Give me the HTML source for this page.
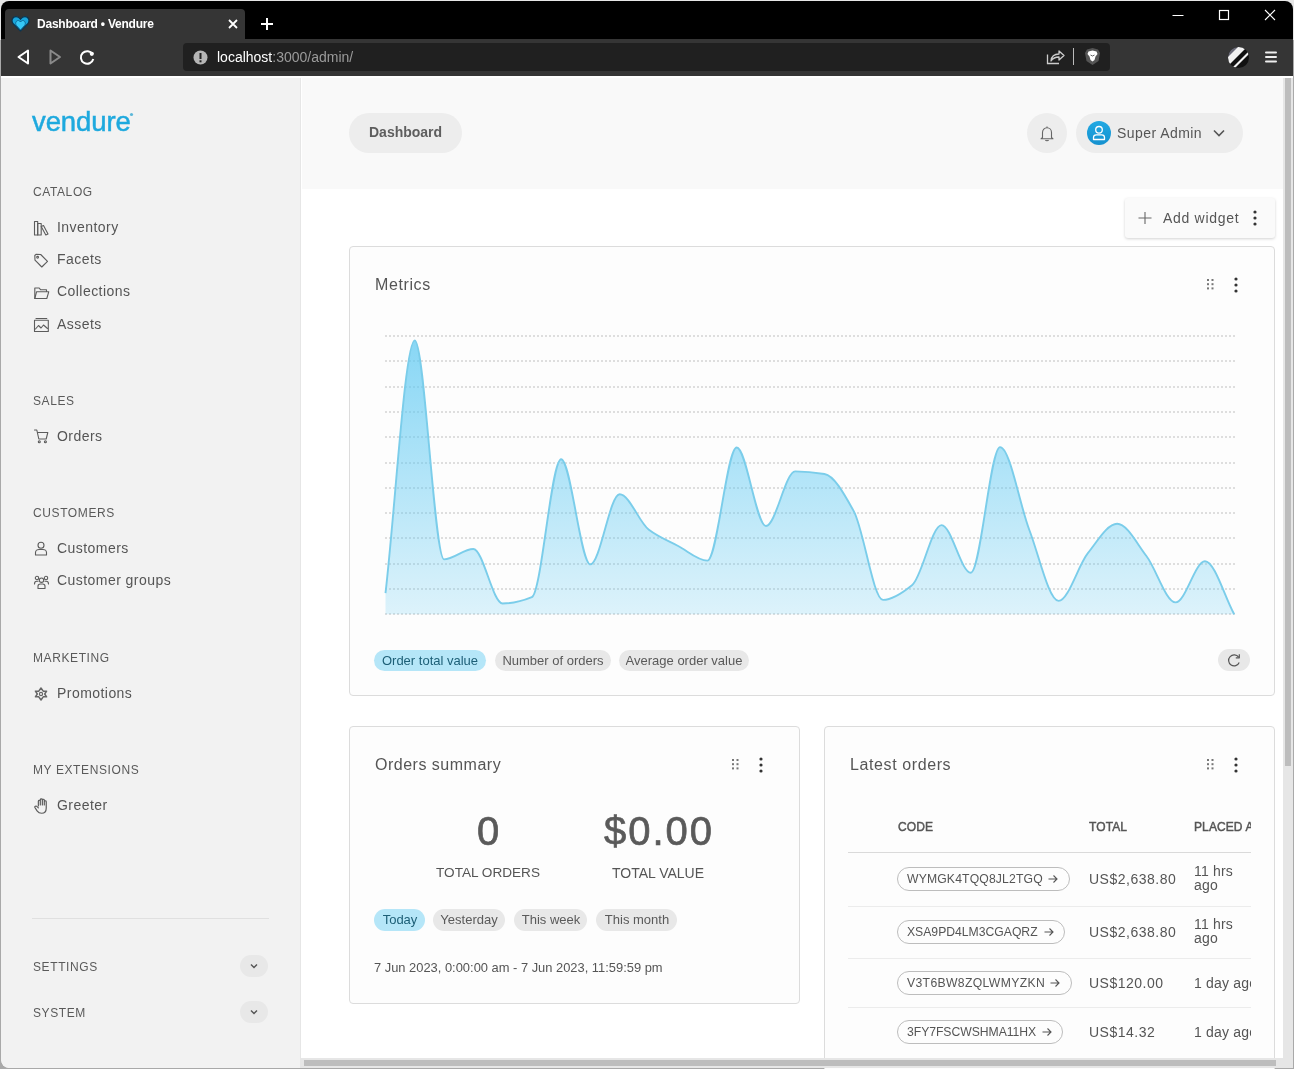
<!DOCTYPE html>
<html><head><meta charset="utf-8"><title>Dashboard • Vendure</title>
<style>
html,body{margin:0;padding:0;}
body{width:1294px;height:1069px;position:relative;overflow:hidden;background:#f3f3f3;font-family:"Liberation Sans",sans-serif;}
div{position:absolute;box-sizing:border-box;}
.t{white-space:nowrap;will-change:transform;}
</style></head><body>
<div style="left:0px;top:0px;width:1294px;height:1069px;background:#a9a9a9;"></div>
<div style="left:0px;top:0px;width:1294px;height:40px;background:#e6e6e6;"></div>
<div style="left:1px;top:1px;width:1292px;height:1067px;background:#000;border-radius:8px;"></div>
<div style="left:5px;top:9px;width:240px;height:30px;background:#353535;border-radius:4px 4px 0 0;"></div>
<svg style="position:absolute;left:11px;top:15px;" width="19" height="17" viewBox="0 0 19 17"><path d="M9.5 16 L2.2 8.8 C-0.3 5.8 1.6 1.6 5 1.6 C7 1.6 8.5 2.8 9.5 4.2 C10.5 2.8 12 1.6 14 1.6 C17.4 1.6 19.3 5.8 16.8 8.8 Z" fill="#18a6dd" stroke="#0b3550" stroke-width="1.2"/><path d="M9.5 15 L5.3 10.3 C3.8 8.3 5.2 5.4 7.4 5.5 C8.4 5.6 9 6.2 9.5 7 C10 6.2 10.6 5.6 11.6 5.5 C13.8 5.4 15.2 8.3 13.7 10.3 Z" fill="#35c8f7" stroke="#0e5a84" stroke-width="0.8"/></svg>
<div class="t" style="left:37px;top:16.84px;font-size:12px;line-height:14px;font-weight:700;color:#fff;letter-spacing:-0.22px;">Dashboard • Vendure</div>
<svg style="position:absolute;left:227px;top:18px;" width="12" height="12" viewBox="0 0 12 12"><path d="M2 2 L10 10 M10 2 L2 10" stroke="#fff" stroke-width="1.8"/></svg>
<svg style="position:absolute;left:260px;top:17px;" width="14" height="14" viewBox="0 0 14 14"><path d="M7 1 V13 M1 7 H13" stroke="#fff" stroke-width="2"/></svg>
<svg style="position:absolute;left:1170px;top:5px;" width="110" height="20" viewBox="0 0 110 20"><path d="M2.5 10.5 H13.5" stroke="#fff" stroke-width="1"/><rect x="49.5" y="5.5" width="9" height="9" fill="none" stroke="#fff" stroke-width="1.2"/><path d="M95 5 L105 15 M105 5 L95 15" stroke="#fff" stroke-width="1.1"/></svg>
<div style="left:1px;top:39px;width:1292px;height:37px;background:#353535;"></div>
<svg style="position:absolute;left:14px;top:46px;" width="84" height="22" viewBox="0 0 84 22"><path d="M4.5 11 L14 4.5 V17.5 Z" fill="none" stroke="#fff" stroke-width="2" stroke-linejoin="round"/><path d="M36.5 4.5 L46 11 L36.5 17.5 Z" fill="none" stroke="#8a8a8a" stroke-width="2" stroke-linejoin="round"/><path d="M78.6 8.2 A6.3 6.3 0 1 0 79.3 13" fill="none" stroke="#fff" stroke-width="2"/><circle cx="77.8" cy="7.8" r="2.1" fill="#fff"/></svg>
<div style="left:183px;top:43px;width:927px;height:28px;background:#202020;border-radius:4px;"></div>
<svg style="position:absolute;left:193px;top:50px;" width="15" height="15" viewBox="0 0 15 15"><circle cx="7.5" cy="7.5" r="7" fill="#b5b5b5"/><rect x="6.5" y="3" width="2" height="6" fill="#202020"/><rect x="6.5" y="10.3" width="2" height="2" fill="#202020"/></svg>
<div class="t" style="left:217px;top:48.65px;font-size:14px;line-height:17px;font-weight:400;color:#fff;letter-spacing:0px;">localhost<span style="color:#9a9a9a">:3000/admin/</span></div>
<svg style="position:absolute;left:1045px;top:47px;" width="22" height="20" viewBox="0 0 22 20"><path d="M2.5 7.5 V16.5 H14" fill="none" stroke="#ccc" stroke-width="1.3"/><path d="M6 14 C6.5 9 10 7 14 7 V4 L19 8.5 L14 13 V10 C11 10 8 11 6 14 Z" fill="none" stroke="#ccc" stroke-width="1.3" stroke-linejoin="round"/></svg>
<div style="left:1073px;top:48px;width:1px;height:17px;background:#bbb;"></div>
<svg style="position:absolute;left:1084px;top:47px;" width="17" height="19" viewBox="0 0 17 19"><path d="M8.5 1 L14 2.5 L16 6 L14.5 14 L8.5 18 L2.5 14 L1 6 L3 2.5 Z" fill="#555"/><path d="M8.5 3.5 L12.5 4.5 L13.5 7 L11.5 9.5 L10.5 13 L8.5 14.5 L6.5 13 L5.5 9.5 L3.5 7 L4.5 4.5 Z" fill="#fff"/><path d="M6.5 8 L8.5 9 L10.5 8" stroke="#555" stroke-width="0.9" fill="none"/></svg>
<svg style="position:absolute;left:1227px;top:46px;" width="23" height="23" viewBox="0 0 23 23"><defs><clipPath id="cc"><circle cx="11.5" cy="11.5" r="10.5"/></clipPath></defs><g clip-path="url(#cc)"><rect width="23" height="23" fill="#111"/><path d="M-2 16 L16 -2 L-2 -2 Z" fill="#6b6b78"/><path d="M1 20 L20 1 L15 -3 L-4 16 Z" fill="#f2f2f2"/><path d="M6 24 L24 6 L22.5 4.5 L4.5 22.5 Z" fill="#f2f2f2"/></g></svg>
<svg style="position:absolute;left:1264px;top:50px;" width="14" height="14" viewBox="0 0 14 14"><path d="M2 2.5 H12 M2 7 H12 M2 11.5 H12" stroke="#eee" stroke-width="2" stroke-linecap="round"/></svg>
<div style="left:1px;top:76px;width:1292px;height:992px;background:#fff;border-radius:0 0 8px 8px;overflow:hidden;"></div>
<div style="left:1px;top:78px;width:299px;height:990px;background:#f2f2f2;border-radius:0 0 0 8px;"></div>
<div style="left:300px;top:78px;width:1px;height:990px;background:#e6e6e6;"></div>
<div class="t" style="left:31.5px;top:104.97px;font-size:27.5px;line-height:33px;font-weight:400;color:#1ea9de;letter-spacing:-0.1px;-webkit-text-stroke:0.5px #1ea9de;">vendure</div>
<svg style="position:absolute;left:129px;top:112px;" width="5" height="5" viewBox="0 0 5 5"><circle cx="2.5" cy="2.5" r="1.6" fill="#5bb7d9"/></svg>
<div class="t" style="left:33px;top:185.04px;font-size:12px;line-height:14px;font-weight:400;color:#5a5a5a;letter-spacing:0.6px;">CATALOG</div>
<div class="t" style="left:57px;top:218.65px;font-size:14px;line-height:17px;font-weight:400;color:#555;letter-spacing:0.45px;">Inventory</div>
<div class="t" style="left:57px;top:250.65px;font-size:14px;line-height:17px;font-weight:400;color:#555;letter-spacing:0.45px;">Facets</div>
<div class="t" style="left:57px;top:283.15px;font-size:14px;line-height:17px;font-weight:400;color:#555;letter-spacing:0.45px;">Collections</div>
<div class="t" style="left:57px;top:315.65px;font-size:14px;line-height:17px;font-weight:400;color:#555;letter-spacing:0.45px;">Assets</div>
<div class="t" style="left:33px;top:393.84px;font-size:12px;line-height:14px;font-weight:400;color:#5a5a5a;letter-spacing:0.6px;">SALES</div>
<div class="t" style="left:57px;top:427.65px;font-size:14px;line-height:17px;font-weight:400;color:#555;letter-spacing:0.45px;">Orders</div>
<div class="t" style="left:33px;top:506.14px;font-size:12px;line-height:14px;font-weight:400;color:#5a5a5a;letter-spacing:0.6px;">CUSTOMERS</div>
<div class="t" style="left:57px;top:539.65px;font-size:14px;line-height:17px;font-weight:400;color:#555;letter-spacing:0.45px;">Customers</div>
<div class="t" style="left:57px;top:571.75px;font-size:14px;line-height:17px;font-weight:400;color:#555;letter-spacing:0.45px;">Customer groups</div>
<div class="t" style="left:33px;top:650.74px;font-size:12px;line-height:14px;font-weight:400;color:#5a5a5a;letter-spacing:0.6px;">MARKETING</div>
<div class="t" style="left:57px;top:684.75px;font-size:14px;line-height:17px;font-weight:400;color:#555;letter-spacing:0.45px;">Promotions</div>
<div class="t" style="left:33px;top:763.04px;font-size:12px;line-height:14px;font-weight:400;color:#5a5a5a;letter-spacing:0.6px;">MY EXTENSIONS</div>
<div class="t" style="left:57px;top:796.75px;font-size:14px;line-height:17px;font-weight:400;color:#555;letter-spacing:0.45px;">Greeter</div>
<div style="left:32px;top:918px;width:237px;height:1px;background:#e0e0e0;"></div>
<div class="t" style="left:33px;top:960.24px;font-size:12px;line-height:14px;font-weight:400;color:#5a5a5a;letter-spacing:0.6px;">SETTINGS</div>
<div class="t" style="left:33px;top:1006.34px;font-size:12px;line-height:14px;font-weight:400;color:#5a5a5a;letter-spacing:0.6px;">SYSTEM</div>
<div style="left:240px;top:955px;width:28px;height:22px;background:#e8e8e8;border-radius:11px;"></div>
<svg style="position:absolute;left:248px;top:960px;" width="12" height="12" viewBox="0 0 12 12"><path d="M3 4.5 L6 7.5 L9 4.5" fill="none" stroke="#555" stroke-width="1.4"/></svg>
<div style="left:240px;top:1000.6px;width:28px;height:22px;background:#e8e8e8;border-radius:11px;"></div>
<svg style="position:absolute;left:248px;top:1005.6px;" width="12" height="12" viewBox="0 0 12 12"><path d="M3 4.5 L6 7.5 L9 4.5" fill="none" stroke="#555" stroke-width="1.4"/></svg>
<svg style="position:absolute;left:33px;top:220px;" width="17" height="17" viewBox="0 0 17 17"><rect x="1.5" y="1.5" width="3.2" height="13.5" fill="none" stroke="#5c5c5c" stroke-width="1.1" stroke-linejoin="round" stroke-linecap="round"/><rect x="4.7" y="3.5" width="3.5" height="11.5" fill="none" stroke="#5c5c5c" stroke-width="1.1" stroke-linejoin="round" stroke-linecap="round"/><path d="M8.2 6.5 L10.5 5.5 L15 14 L12.8 15 Z" fill="none" stroke="#5c5c5c" stroke-width="1.1" stroke-linejoin="round" stroke-linecap="round"/></svg>
<svg style="position:absolute;left:33px;top:253px;" width="17" height="16" viewBox="0 0 17 16"><path d="M1.8 2.5 L2 7.2 L8.8 14 L14.5 8.3 L7.7 1.5 L3 1.3 Z" fill="none" stroke="#5c5c5c" stroke-width="1.1" stroke-linejoin="round" stroke-linecap="round"/><circle cx="4.6" cy="4.3" r="0.9" fill="none" stroke="#5c5c5c" stroke-width="1.1" stroke-linejoin="round" stroke-linecap="round"/></svg>
<svg style="position:absolute;left:33px;top:285px;" width="18" height="16" viewBox="0 0 18 16"><path d="M1.8 13.5 V3 H6.2 L7.5 4.7 H13.5 V6.5" fill="none" stroke="#5c5c5c" stroke-width="1.1" stroke-linejoin="round" stroke-linecap="round"/><path d="M1.8 13.5 L3.6 6.7 H15.8 L13.8 13.5 Z" fill="none" stroke="#5c5c5c" stroke-width="1.1" stroke-linejoin="round" stroke-linecap="round"/></svg>
<svg style="position:absolute;left:33px;top:317px;" width="17" height="16" viewBox="0 0 17 16"><rect x="1.5" y="3.2" width="13.8" height="11.3" fill="none" stroke="#5c5c5c" stroke-width="1.1" stroke-linejoin="round" stroke-linecap="round"/><path d="M3 1.5 H13.8" fill="none" stroke="#5c5c5c" stroke-width="1.1" stroke-linejoin="round" stroke-linecap="round"/><path d="M2.5 12 L5.5 8.5 L8 11 L10.5 8 L14.5 11.5" fill="none" stroke="#5c5c5c" stroke-width="1.1" stroke-linejoin="round" stroke-linecap="round"/></svg>
<svg style="position:absolute;left:33px;top:428px;" width="17" height="17" viewBox="0 0 17 17"><path d="M1.5 2 H3.8 L5.8 11 H13.2 L14.8 4.5 H4.5" fill="none" stroke="#5c5c5c" stroke-width="1.1" stroke-linejoin="round" stroke-linecap="round"/><circle cx="6.3" cy="13.8" r="1" fill="none" stroke="#5c5c5c" stroke-width="1.1" stroke-linejoin="round" stroke-linecap="round"/><circle cx="12.4" cy="13.8" r="1" fill="none" stroke="#5c5c5c" stroke-width="1.1" stroke-linejoin="round" stroke-linecap="round"/></svg>
<svg style="position:absolute;left:33px;top:540px;" width="17" height="17" viewBox="0 0 17 17"><circle cx="8" cy="5.2" r="3" fill="none" stroke="#5c5c5c" stroke-width="1.1" stroke-linejoin="round" stroke-linecap="round"/><path d="M2.5 15 V12.5 C2.5 10.5 4.5 9.5 6 9.5 H10 C11.5 9.5 13.5 10.5 13.5 12.5 V15 Z" fill="none" stroke="#5c5c5c" stroke-width="1.1" stroke-linejoin="round" stroke-linecap="round"/></svg>
<svg style="position:absolute;left:33px;top:574px;" width="17" height="16" viewBox="0 0 17 16"><circle cx="8.5" cy="6.2" r="2.2" fill="none" stroke="#5c5c5c" stroke-width="1.1" stroke-linejoin="round" stroke-linecap="round"/><circle cx="4" cy="4" r="1.7" fill="none" stroke="#5c5c5c" stroke-width="1.1" stroke-linejoin="round" stroke-linecap="round"/><circle cx="13" cy="4" r="1.7" fill="none" stroke="#5c5c5c" stroke-width="1.1" stroke-linejoin="round" stroke-linecap="round"/><path d="M5 14.5 V12.3 C5 11 6 10 7.3 10 H9.7 C11 10 12 11 12 12.3 V14.5 Z" fill="none" stroke="#5c5c5c" stroke-width="1.1" stroke-linejoin="round" stroke-linecap="round"/><path d="M1.5 10 C1.5 8 2.5 7.3 3.8 7.3 H5" fill="none" stroke="#5c5c5c" stroke-width="1.1" stroke-linejoin="round" stroke-linecap="round"/><path d="M15.5 10 C15.5 8 14.5 7.3 13.2 7.3 H12" fill="none" stroke="#5c5c5c" stroke-width="1.1" stroke-linejoin="round" stroke-linecap="round"/></svg>
<svg style="position:absolute;left:33px;top:686px;" width="16" height="16" viewBox="0 0 16 16"><path d="M8 2 L10.2 5.2 L13.6 5.2 L11.7 8 L13.6 10.8 L10.2 10.8 L8 14 L5.8 10.8 L2.4 10.8 L4.3 8 L2.4 5.2 L5.8 5.2 Z" fill="none" stroke="#666" stroke-width="1.5" stroke-linejoin="round"/><circle cx="8" cy="8" r="1.6" fill="none" stroke="#666" stroke-width="1.2"/></svg>
<svg style="position:absolute;left:33.5px;top:797px;" width="17" height="18" viewBox="0 0 17 18"><g transform="translate(-0.5,0.3) scale(1.08,0.97)"><path d="M4.5 9 V4 C4.5 2.8 6.3 2.8 6.3 4 V8 V2.5 C6.3 1.3 8.2 1.3 8.2 2.5 V8 V3 C8.2 1.8 10 1.8 10 3 V8 V4.5 C10 3.3 11.8 3.3 11.8 4.5 V11 C11.8 14.5 10 16.5 7.5 16.5 C5.5 16.5 4.3 15.5 3.3 14 L1.3 10.5 C0.8 9.5 2.3 8.5 3.2 9.5 L4.5 11" fill="none" stroke="#5c5c5c" stroke-width="1.1" stroke-linejoin="round" stroke-linecap="round"/></svg>
<div style="left:302px;top:78px;width:981px;height:111px;background:#f9f9f9;"></div>
<div style="left:349px;top:113px;width:113px;height:40px;background:#ededed;border-radius:20px;"></div>
<div class="t" style="left:369px;top:124.35px;font-size:14px;line-height:17px;font-weight:700;color:#5e5e5e;letter-spacing:0px;">Dashboard</div>
<div style="left:1027px;top:113px;width:40px;height:40px;background:#ededed;border-radius:20px;"></div>
<svg style="position:absolute;left:1039px;top:125px;" width="16" height="17" viewBox="0 0 16 17"><path d="M3.5 12.5 V7.5 C3.5 4.8 5.5 2.8 8 2.8 C10.5 2.8 12.5 4.8 12.5 7.5 V12.5 L14 13.8 H2 L3.5 12.5 Z" fill="none" stroke="#666" stroke-width="1.1" stroke-linejoin="round"/><path d="M6.5 15 C6.8 16 9.2 16 9.5 15" fill="none" stroke="#666" stroke-width="1.1"/><path d="M8 1.5 V2.8" stroke="#666" stroke-width="1.1"/></svg>
<div style="left:1076px;top:113px;width:167px;height:40px;background:#ededed;border-radius:20px;"></div>
<svg style="position:absolute;left:1087px;top:121px;" width="24" height="24" viewBox="0 0 24 24"><defs><linearGradient id="av" x1="0" y1="0" x2="0" y2="1"><stop offset="0" stop-color="#22a9e3"/><stop offset="1" stop-color="#1591cf"/></linearGradient></defs><circle cx="12" cy="12" r="12" fill="url(#av)"/><circle cx="12" cy="8.8" r="3.3" fill="none" stroke="#fff" stroke-width="1.3"/><path d="M6.5 18.5 V16.5 C6.5 14.8 7.8 13.8 9.3 13.8 H14.7 C16.2 13.8 17.5 14.8 17.5 16.5 V18.5 Z" fill="none" stroke="#fff" stroke-width="1.3" stroke-linejoin="round"/></svg>
<div class="t" style="left:1117px;top:124.65px;font-size:14px;line-height:17px;font-weight:400;color:#555;letter-spacing:0.45px;">Super Admin</div>
<svg style="position:absolute;left:1211px;top:126px;" width="16" height="14" viewBox="0 0 16 14"><path d="M3 4.5 L8 9.5 L13 4.5" fill="none" stroke="#555" stroke-width="1.6"/></svg>
<div style="left:1125px;top:198px;width:150px;height:40px;background:#fafafa;border-radius:3px;box-shadow:0 1px 3px rgba(0,0,0,0.18);"></div>
<svg style="position:absolute;left:1137px;top:211px;" width="16" height="14" viewBox="0 0 16 14"><path d="M8 1 V13 M1.5 7 H14.5" stroke="#666" stroke-width="1.1"/></svg>
<div class="t" style="left:1163px;top:209.65px;font-size:14px;line-height:17px;font-weight:400;color:#555;letter-spacing:0.7px;">Add widget</div>
<svg style="position:absolute;left:1252px;top:208.5px;" width="6" height="18" viewBox="0 0 6 18"><circle cx="3" cy="3" r="1.6" fill="#333"/><circle cx="3" cy="9" r="1.6" fill="#333"/><circle cx="3" cy="15" r="1.6" fill="#333"/></svg>
<div style="left:349px;top:246px;width:926px;height:450px;background:#fdfdfd;border:1px solid #dcdcdc;border-radius:4px;"></div>
<div class="t" style="left:374.5px;top:274.96px;font-size:16px;line-height:19px;font-weight:400;color:#555;letter-spacing:0.6px;">Metrics</div>
<svg style="position:absolute;left:1206.75px;top:278.8px;" width="7" height="11" viewBox="0 0 7 11"><rect x="0" y="0" width="2" height="2" fill="#777"/><rect x="0" y="4.2" width="2" height="2" fill="#777"/><rect x="0" y="8.4" width="2" height="2" fill="#777"/><rect x="4.5" y="0" width="2" height="2" fill="#777"/><rect x="4.5" y="4.2" width="2" height="2" fill="#777"/><rect x="4.5" y="8.4" width="2" height="2" fill="#777"/></svg>
<svg style="position:absolute;left:1233px;top:276px;" width="6" height="18" viewBox="0 0 6 18"><circle cx="3" cy="3" r="1.6" fill="#333"/><circle cx="3" cy="9" r="1.6" fill="#333"/><circle cx="3" cy="15" r="1.6" fill="#333"/></svg>
<svg style="position:absolute;left:375px;top:325px" width="870" height="300" viewBox="375 325 870 300"><defs><linearGradient id="ag" x1="0" y1="0" x2="0" y2="1"><stop offset="0" stop-color="#5bc8f2" stop-opacity="0.72"/><stop offset="1" stop-color="#5bc8f2" stop-opacity="0.2"/></linearGradient></defs>
<line x1="385" y1="336" x2="1236" y2="336" stroke="rgba(0,0,0,0.12)" stroke-width="2" stroke-dasharray="2 2"/><line x1="385" y1="361" x2="1236" y2="361" stroke="rgba(0,0,0,0.12)" stroke-width="2" stroke-dasharray="2 2"/><line x1="385" y1="387" x2="1236" y2="387" stroke="rgba(0,0,0,0.12)" stroke-width="2" stroke-dasharray="2 2"/><line x1="385" y1="412" x2="1236" y2="412" stroke="rgba(0,0,0,0.12)" stroke-width="2" stroke-dasharray="2 2"/><line x1="385" y1="437" x2="1236" y2="437" stroke="rgba(0,0,0,0.12)" stroke-width="2" stroke-dasharray="2 2"/><line x1="385" y1="463" x2="1236" y2="463" stroke="rgba(0,0,0,0.12)" stroke-width="2" stroke-dasharray="2 2"/><line x1="385" y1="488" x2="1236" y2="488" stroke="rgba(0,0,0,0.12)" stroke-width="2" stroke-dasharray="2 2"/><line x1="385" y1="513" x2="1236" y2="513" stroke="rgba(0,0,0,0.12)" stroke-width="2" stroke-dasharray="2 2"/><line x1="385" y1="538" x2="1236" y2="538" stroke="rgba(0,0,0,0.12)" stroke-width="2" stroke-dasharray="2 2"/><line x1="385" y1="564" x2="1236" y2="564" stroke="rgba(0,0,0,0.12)" stroke-width="2" stroke-dasharray="2 2"/><line x1="385" y1="589" x2="1236" y2="589" stroke="rgba(0,0,0,0.12)" stroke-width="2" stroke-dasharray="2 2"/><line x1="385" y1="614" x2="1236" y2="614" stroke="rgba(0,0,0,0.12)" stroke-width="2" stroke-dasharray="2 2"/><path d="M385.50,593.10 C395.26,508.87 405.01,340.40 414.77,340.40 C424.52,340.40 434.28,559.40 444.03,559.40 C453.79,559.40 463.54,549.00 473.30,549.00 C483.05,549.00 492.81,603.50 502.56,603.50 C512.32,603.50 522.07,601.22 531.83,597.20 C541.58,593.18 551.34,459.20 561.09,459.20 C570.85,459.20 580.60,564.40 590.36,564.40 C600.11,564.40 609.87,494.20 619.62,494.20 C629.38,494.20 639.13,522.38 648.89,529.80 C658.64,537.22 668.40,540.88 678.16,546.00 C687.91,551.12 697.67,560.60 707.42,560.60 C717.18,560.60 726.93,447.50 736.69,447.50 C746.44,447.50 756.20,526.00 765.95,526.00 C775.71,526.00 785.46,471.40 795.22,471.40 C804.97,471.40 814.73,472.38 824.48,474.00 C834.24,475.62 843.99,493.66 853.75,511.10 C863.50,528.54 873.26,599.90 883.01,599.90 C892.77,599.90 902.52,592.95 912.28,585.00 C922.03,577.05 931.79,525.10 941.54,525.10 C951.30,525.10 961.06,572.80 970.81,572.80 C980.57,572.80 990.32,447.10 1000.08,447.10 C1009.83,447.10 1019.59,504.52 1029.34,530.00 C1039.10,555.48 1048.85,600.90 1058.61,600.90 C1068.36,600.90 1078.12,565.33 1087.87,553.20 C1097.63,541.07 1107.38,523.80 1117.14,523.80 C1126.89,523.80 1136.65,543.33 1146.40,556.00 C1156.16,568.67 1165.91,602.40 1175.67,602.40 C1185.42,602.40 1195.18,561.20 1204.93,561.20 C1214.69,561.20 1224.44,596.60 1234.20,614.30 L1234.20,614.3 L385.50,614.3 Z" fill="url(#ag)"/><path d="M385.50,593.10 C395.26,508.87 405.01,340.40 414.77,340.40 C424.52,340.40 434.28,559.40 444.03,559.40 C453.79,559.40 463.54,549.00 473.30,549.00 C483.05,549.00 492.81,603.50 502.56,603.50 C512.32,603.50 522.07,601.22 531.83,597.20 C541.58,593.18 551.34,459.20 561.09,459.20 C570.85,459.20 580.60,564.40 590.36,564.40 C600.11,564.40 609.87,494.20 619.62,494.20 C629.38,494.20 639.13,522.38 648.89,529.80 C658.64,537.22 668.40,540.88 678.16,546.00 C687.91,551.12 697.67,560.60 707.42,560.60 C717.18,560.60 726.93,447.50 736.69,447.50 C746.44,447.50 756.20,526.00 765.95,526.00 C775.71,526.00 785.46,471.40 795.22,471.40 C804.97,471.40 814.73,472.38 824.48,474.00 C834.24,475.62 843.99,493.66 853.75,511.10 C863.50,528.54 873.26,599.90 883.01,599.90 C892.77,599.90 902.52,592.95 912.28,585.00 C922.03,577.05 931.79,525.10 941.54,525.10 C951.30,525.10 961.06,572.80 970.81,572.80 C980.57,572.80 990.32,447.10 1000.08,447.10 C1009.83,447.10 1019.59,504.52 1029.34,530.00 C1039.10,555.48 1048.85,600.90 1058.61,600.90 C1068.36,600.90 1078.12,565.33 1087.87,553.20 C1097.63,541.07 1107.38,523.80 1117.14,523.80 C1126.89,523.80 1136.65,543.33 1146.40,556.00 C1156.16,568.67 1165.91,602.40 1175.67,602.40 C1185.42,602.40 1195.18,561.20 1204.93,561.20 C1214.69,561.20 1224.44,596.60 1234.20,614.30" fill="none" stroke="#7bcdea" stroke-width="1.9"/></svg>
<div style="left:374px;top:650px;width:112px;height:21px;background:#b5e6f8;border-radius:10.5px;"></div>
<div class="t" style="left:430.0px;top:652.60px;font-size:13px;line-height:16px;font-weight:400;color:#1d5f77;letter-spacing:0px;transform:translateX(-50%);">Order total value</div>
<div style="left:495px;top:650px;width:116px;height:21px;background:#e8e8e8;border-radius:10.5px;"></div>
<div class="t" style="left:553.0px;top:652.60px;font-size:13px;line-height:16px;font-weight:400;color:#5a5a5a;letter-spacing:0px;transform:translateX(-50%);">Number of orders</div>
<div style="left:619px;top:650px;width:130px;height:21px;background:#e8e8e8;border-radius:10.5px;"></div>
<div class="t" style="left:684.0px;top:652.60px;font-size:13px;line-height:16px;font-weight:400;color:#5a5a5a;letter-spacing:0px;transform:translateX(-50%);">Average order value</div>
<div style="left:1218px;top:649px;width:32px;height:22px;background:#e8e8e8;border-radius:11px;"></div>
<svg style="position:absolute;left:1226px;top:652px;" width="16" height="16" viewBox="0 0 16 16"><path d="M12.6 5.2 A5.5 5.5 0 1 0 13.2 10.5" fill="none" stroke="#555" stroke-width="1.2"/><path d="M13.3 2.3 V5.8 H9.8" fill="none" stroke="#555" stroke-width="1.2" stroke-linejoin="round"/></svg>
<div style="left:349px;top:726px;width:451px;height:278px;background:#fdfdfd;border:1px solid #dcdcdc;border-radius:4px;"></div>
<div class="t" style="left:374.5px;top:754.96px;font-size:16px;line-height:19px;font-weight:400;color:#555;letter-spacing:0.5px;">Orders summary</div>
<svg style="position:absolute;left:731.75px;top:758.8px;" width="7" height="11" viewBox="0 0 7 11"><rect x="0" y="0" width="2" height="2" fill="#777"/><rect x="0" y="4.2" width="2" height="2" fill="#777"/><rect x="0" y="8.4" width="2" height="2" fill="#777"/><rect x="4.5" y="0" width="2" height="2" fill="#777"/><rect x="4.5" y="4.2" width="2" height="2" fill="#777"/><rect x="4.5" y="8.4" width="2" height="2" fill="#777"/></svg>
<svg style="position:absolute;left:758px;top:756px;" width="6" height="18" viewBox="0 0 6 18"><circle cx="3" cy="3" r="1.6" fill="#333"/><circle cx="3" cy="9" r="1.6" fill="#333"/><circle cx="3" cy="15" r="1.6" fill="#333"/></svg>
<div class="t" style="left:487.5px;top:807.14px;font-size:40px;line-height:48px;font-weight:400;color:#5a5a5a;letter-spacing:0px;transform:translateX(-50%);-webkit-text-stroke:0.7px #5a5a5a;">0</div>
<div class="t" style="left:657.5px;top:807.44px;font-size:40px;line-height:48px;font-weight:400;color:#5a5a5a;letter-spacing:2px;transform:translateX(-50%);padding-left:2px;-webkit-text-stroke:0.7px #5a5a5a;">$0.00</div>
<div class="t" style="left:488px;top:865.29px;font-size:13.6px;line-height:16px;font-weight:400;color:#555;letter-spacing:0px;transform:translateX(-50%);">TOTAL ORDERS</div>
<div class="t" style="left:658px;top:864.65px;font-size:14px;line-height:17px;font-weight:400;color:#555;letter-spacing:0px;transform:translateX(-50%);">TOTAL VALUE</div>
<div style="left:374px;top:909px;width:51px;height:22px;background:#b5e6f8;border-radius:11.0px;"></div>
<div class="t" style="left:399.5px;top:912.10px;font-size:13px;line-height:16px;font-weight:400;color:#1d5f77;letter-spacing:0px;transform:translateX(-50%);">Today</div>
<div style="left:433px;top:909px;width:72px;height:22px;background:#e8e8e8;border-radius:11.0px;"></div>
<div class="t" style="left:469.0px;top:912.10px;font-size:13px;line-height:16px;font-weight:400;color:#5a5a5a;letter-spacing:0px;transform:translateX(-50%);">Yesterday</div>
<div style="left:514px;top:909px;width:73px;height:22px;background:#e8e8e8;border-radius:11.0px;"></div>
<div class="t" style="left:550.5px;top:912.10px;font-size:13px;line-height:16px;font-weight:400;color:#5a5a5a;letter-spacing:0px;transform:translateX(-50%);">This week</div>
<div style="left:596px;top:909px;width:81px;height:22px;background:#e8e8e8;border-radius:11.0px;"></div>
<div class="t" style="left:636.5px;top:912.10px;font-size:13px;line-height:16px;font-weight:400;color:#5a5a5a;letter-spacing:0px;transform:translateX(-50%);">This month</div>
<div class="t" style="left:373.5px;top:959.53px;font-size:12.9px;line-height:15px;font-weight:400;color:#555;letter-spacing:0px;">7 Jun 2023, 0:00:00 am - 7 Jun 2023, 11:59:59 pm</div>
<div style="left:824px;top:726px;width:451px;height:400px;background:#fdfdfd;border:1px solid #dcdcdc;border-radius:4px;"></div>
<div class="t" style="left:849.5px;top:754.96px;font-size:16px;line-height:19px;font-weight:400;color:#555;letter-spacing:0.6px;">Latest orders</div>
<svg style="position:absolute;left:1206.75px;top:758.8px;" width="7" height="11" viewBox="0 0 7 11"><rect x="0" y="0" width="2" height="2" fill="#777"/><rect x="0" y="4.2" width="2" height="2" fill="#777"/><rect x="0" y="8.4" width="2" height="2" fill="#777"/><rect x="4.5" y="0" width="2" height="2" fill="#777"/><rect x="4.5" y="4.2" width="2" height="2" fill="#777"/><rect x="4.5" y="8.4" width="2" height="2" fill="#777"/></svg>
<svg style="position:absolute;left:1233px;top:756px;" width="6" height="18" viewBox="0 0 6 18"><circle cx="3" cy="3" r="1.6" fill="#333"/><circle cx="3" cy="9" r="1.6" fill="#333"/><circle cx="3" cy="15" r="1.6" fill="#333"/></svg>
<div style="left:848px;top:800px;width:403px;height:258px;overflow:hidden;">
<div class="t" style="left:49.5px;top:19.84px;font-size:12px;line-height:14px;font-weight:400;color:#555;letter-spacing:0.1px;-webkit-text-stroke:0.45px #555;">CODE</div>
<div class="t" style="left:241px;top:19.84px;font-size:12px;line-height:14px;font-weight:400;color:#555;letter-spacing:0.1px;-webkit-text-stroke:0.45px #555;">TOTAL</div>
<div class="t" style="left:345.5px;top:19.84px;font-size:12px;line-height:14px;font-weight:400;color:#555;letter-spacing:0.1px;-webkit-text-stroke:0.45px #555;">PLACED AT</div>
<div style="left:0px;top:52px;width:403px;height:1px;background:#dadada;"></div>
<div style="left:49px;top:67px;width:173px;height:24px;border:1px solid #bdbdbd;border-radius:12px;"></div>
<div class="t" style="left:58.5px;top:71.57px;font-size:12.2px;line-height:15px;font-weight:400;color:#555;letter-spacing:0.147px;">WYMGK4TQQ8JL2TGQ</div>
<svg style="position:absolute;left:199px;top:73px;" width="12" height="12" viewBox="0 0 12 12"><path d="M1.5 6 H10 M6.5 2.5 L10 6 L6.5 9.5" fill="none" stroke="#555" stroke-width="1.1"/></svg>
<div class="t" style="left:241px;top:70.65px;font-size:14px;line-height:17px;font-weight:400;color:#555;letter-spacing:0.5px;">US$2,638.80</div>
<div class="t" style="left:345.5px;top:63.25px;font-size:14px;line-height:17px;font-weight:400;color:#555;letter-spacing:0.2px;">11 hrs</div>
<div class="t" style="left:345.5px;top:76.65px;font-size:14px;line-height:17px;font-weight:400;color:#555;letter-spacing:0.2px;">ago</div>
<div style="left:49px;top:120px;width:168px;height:24px;border:1px solid #bdbdbd;border-radius:12px;"></div>
<div class="t" style="left:58.5px;top:124.57px;font-size:12.2px;line-height:15px;font-weight:400;color:#555;letter-spacing:-0.007px;">XSA9PD4LM3CGAQRZ</div>
<svg style="position:absolute;left:195px;top:126px;" width="12" height="12" viewBox="0 0 12 12"><path d="M1.5 6 H10 M6.5 2.5 L10 6 L6.5 9.5" fill="none" stroke="#555" stroke-width="1.1"/></svg>
<div class="t" style="left:241px;top:123.65px;font-size:14px;line-height:17px;font-weight:400;color:#555;letter-spacing:0.5px;">US$2,638.80</div>
<div class="t" style="left:345.5px;top:116.25px;font-size:14px;line-height:17px;font-weight:400;color:#555;letter-spacing:0.2px;">11 hrs</div>
<div class="t" style="left:345.5px;top:129.65px;font-size:14px;line-height:17px;font-weight:400;color:#555;letter-spacing:0.2px;">ago</div>
<div style="left:49px;top:171px;width:175px;height:24px;border:1px solid #bdbdbd;border-radius:12px;"></div>
<div class="t" style="left:58.5px;top:175.57px;font-size:12.2px;line-height:15px;font-weight:400;color:#555;letter-spacing:0.35px;">V3T6BW8ZQLWMYZKN</div>
<svg style="position:absolute;left:201px;top:177px;" width="12" height="12" viewBox="0 0 12 12"><path d="M1.5 6 H10 M6.5 2.5 L10 6 L6.5 9.5" fill="none" stroke="#555" stroke-width="1.1"/></svg>
<div class="t" style="left:241px;top:174.65px;font-size:14px;line-height:17px;font-weight:400;color:#555;letter-spacing:0.5px;">US$120.00</div>
<div class="t" style="left:345.5px;top:174.65px;font-size:14px;line-height:17px;font-weight:400;color:#555;letter-spacing:0.2px;">1 day ago</div>
<div style="left:49px;top:220px;width:166px;height:24px;border:1px solid #bdbdbd;border-radius:12px;"></div>
<div class="t" style="left:58.5px;top:224.57px;font-size:12.2px;line-height:15px;font-weight:400;color:#555;letter-spacing:-0.04px;">3FY7FSCWSHMA11HX</div>
<svg style="position:absolute;left:193px;top:226px;" width="12" height="12" viewBox="0 0 12 12"><path d="M1.5 6 H10 M6.5 2.5 L10 6 L6.5 9.5" fill="none" stroke="#555" stroke-width="1.1"/></svg>
<div class="t" style="left:241px;top:223.65px;font-size:14px;line-height:17px;font-weight:400;color:#555;letter-spacing:0.5px;">US$14.32</div>
<div class="t" style="left:345.5px;top:223.65px;font-size:14px;line-height:17px;font-weight:400;color:#555;letter-spacing:0.2px;">1 day ago</div>
<div style="left:0px;top:106px;width:403px;height:1px;background:#ececec;"></div>
<div style="left:0px;top:158px;width:403px;height:1px;background:#ececec;"></div>
<div style="left:0px;top:207px;width:403px;height:1px;background:#ececec;"></div>
</div>
<div style="left:1283px;top:78px;width:10px;height:990px;background:#e6e6e6;"></div>
<div style="left:1285px;top:78px;width:6px;height:688px;background:#bdbdbd;"></div>
<div style="left:301px;top:1058px;width:982px;height:10px;background:#e6e6e6;"></div>
<div style="left:304px;top:1060px;width:972px;height:6px;background:#bdbdbd;"></div>
</body></html>
